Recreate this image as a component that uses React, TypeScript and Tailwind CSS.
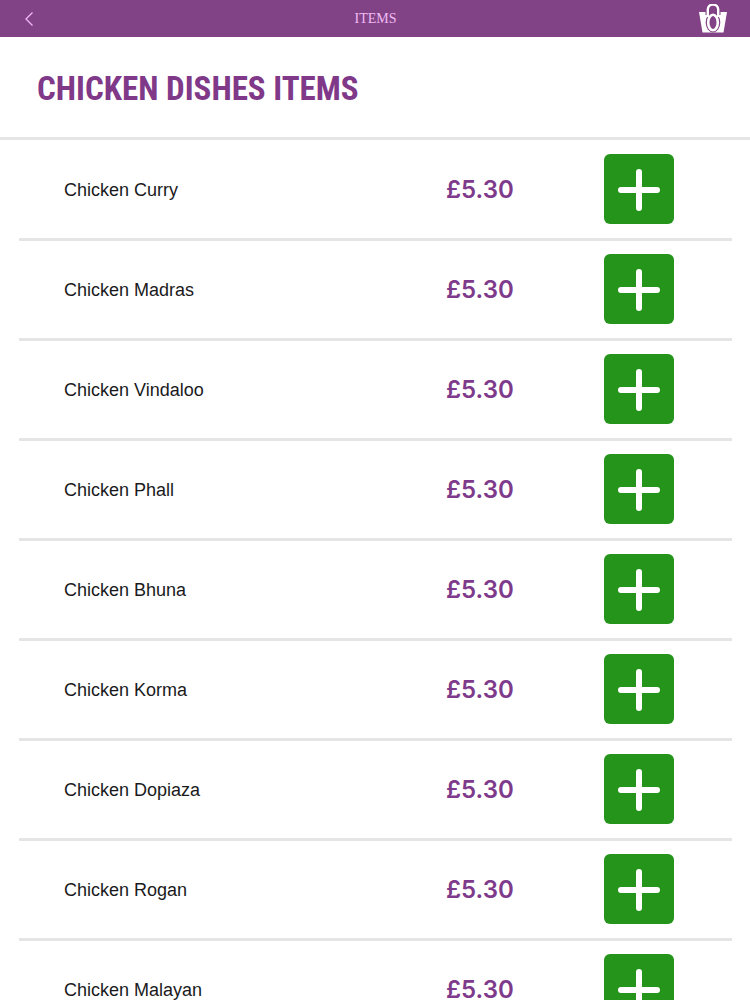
const dishes = [
  'Chicken Curry',
  'Chicken Madras',
  'Chicken Vindaloo',
  'Chicken Phall',
  'Chicken Bhuna',
  'Chicken Korma',
  'Chicken Dopiaza',
  'Chicken Rogan',
  'Chicken Malayan',
];

function BackIcon() {
  return (
    <svg viewBox="0 0 10 16" className="h-4 w-2.5" fill="none" stroke="#f0b8f5" strokeWidth="1.3" aria-hidden="true">
      <path d="M8.500 1.500 2 8l6.500 6.500" />
    </svg>
  );
}

function BagIcon() {
  return (
    <svg viewBox="0 0 28 30" className="h-[30px] w-7" aria-hidden="true">
      <path d="M0 8H28L24.500 28.500H3.500Z" fill="#fff" />
      <path d="M8.500 9V5.500a5.500 5 0 0 1 11 0V9Z" fill="#824286" stroke="#824286" strokeWidth="4" />
      <ellipse cx="14" cy="18.500" rx="7.300" ry="10" fill="#824286" />
      <ellipse cx="14" cy="18.500" rx="4.800" ry="7.700" fill="none" stroke="#fff" strokeWidth="2.600" />
      <path d="M8.800 13V5.500a5.200 5 0 0 1 10.400 0V13" fill="none" stroke="#fff" strokeWidth="2.400" />
    </svg>
  );
}

function PlusIcon() {
  return (
    <svg viewBox="0 0 70 70" className="size-[70px]" fill="none" stroke="#fff" strokeWidth="6" strokeLinecap="round" aria-hidden="true">
      <path d="M35 18V54M17 36H53" />
    </svg>
  );
}

function DishRow({ name }: { name: string }) {
  return (
    <li className="flex h-[100px] items-center border-b-3 border-[#e6e5e6] pr-[58px] pb-px pl-[45px]">
      <span className="flex-1 pt-0.5 font-['Liberation_Sans',sans-serif] text-lg text-[#1a1a1c]">{name}</span>
      <span className="w-[158px] pt-0.5 text-2xl font-semibold text-[#7f3b8b]">£5.30</span>
      <button type="button" aria-label={`Add ${name}`} className="size-[70px] rounded-md bg-[#24941a]">
        <PlusIcon />
      </button>
    </li>
  );
}

export default function App() {
  return (
    <div className="flex h-screen flex-col bg-white font-['Inter',sans-serif]">
      <header className="grid h-[37px] shrink-0 grid-cols-3 items-center bg-[#824286] pr-[23px] pl-6">
        <button type="button" aria-label="Back" className="justify-self-start">
          <BackIcon />
        </button>
        <span className="text-center font-['Liberation_Serif',serif] text-sm text-[#eebcf3]">ITEMS</span>
        <button type="button" aria-label="Basket" className="justify-self-end">
          <BagIcon />
        </button>
      </header>
      <h1 className="flex h-[103px] shrink-0 items-center border-b-3 border-[#e6e5e6] px-[37px] pt-1 font-['Roboto_Condensed','Liberation_Sans_Narrow',sans-serif] text-[33px] leading-10 font-bold text-[#803989]">
        CHICKEN DISHES ITEMS
      </h1>
      <ul className="mr-[18px] ml-[19px] min-h-0 flex-1 overflow-y-auto pt-px [scrollbar-width:none]">
        {dishes.map((name) => (
          <DishRow key={name} name={name} />
        ))}
      </ul>
    </div>
  );
}
